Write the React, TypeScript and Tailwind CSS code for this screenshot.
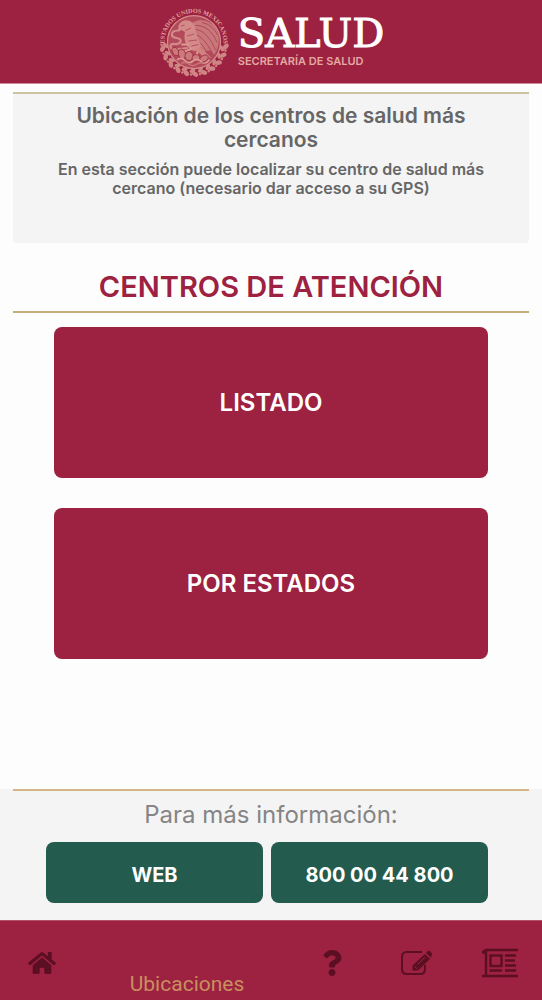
import React from 'react';
import { FaHome, FaQuestion } from 'react-icons/fa';

const leaves = Array.from({ length: 11 }, (_, i) => 10 + i * 16);

const Emblem: React.FC = () => (
  <svg viewBox="0 0 144 144" className="size-18 shrink-0" role="img" aria-label="Estados Unidos Mexicanos">
    <defs>
      <path id="ring" d="M15 88 A59 59 0 1 1 129 88" />
    </defs>
    <text fill="#e0a29d" fontFamily="Liberation Serif, serif" fontWeight="700" fontSize="12.5">
      <textPath href="#ring" startOffset="50%" textAnchor="middle">ESTADOS UNIDOS MEXICANOS</textPath>
    </text>

    {/* laurel and oak wreath */}
    <g fill="#cf8583">
      {leaves.map(a => (
        <g key={a} transform={`rotate(${a} 72 72)`}>
          <ellipse cx="136" cy="70" rx="4.5" ry="7" transform="rotate(35 136 70)" />
          <ellipse cx="129" cy="75" rx="3.5" ry="6.5" transform="rotate(-35 129 75)" />
          <circle cx="137" cy="78" r="2.5" />
        </g>
      ))}
    </g>

    <circle cx="72" cy="72" r="53" fill="#b34a5b" stroke="#d38d8a" strokeWidth="2.5" />

    {/* wing */}
    <path d="M60 42 C76 21 104 27 116 45 C125 61 123 83 112 98 C108 88 100 87 92 92 C86 80 73 70 64 65 Z" fill="#c9777a" />
    <g fill="none" stroke="#a63a4e" strokeWidth="1.5">
      <path d="M69 47 C86 45 102 58 115 88" />
      <path d="M75 39 C93 38 109 50 118 73" />
      <path d="M67 55 C82 56 95 69 108 93" />
      <path d="M71 65 C82 70 91 80 97 91" />
      <path d="M88 33 C103 36 114 46 119 58" />
    </g>

    {/* head and breast */}
    <path d="M41 39 C46 28 61 25 69 34 C78 46 76 62 85 76 C88 88 77 94 66 87 C54 79 51 65 54 52 L47 48 L40 52 Z" fill="#d48a88" />
    <path d="M46 40 L53 38 M55 49 L66 44 M58 60 L72 56 M61 70 L78 68 M67 80 L81 77" stroke="#ab3e52" strokeWidth="1.5" fill="none" />
    <path d="M84 82 L107 104 L90 101 L76 88 Z" fill="#d08380" />

    {/* snake */}
    <path d="M39 49 C25 50 24 62 37 64 C53 67 44 78 32 76 C21 75 23 88 35 87 L58 84" fill="none" stroke="#d48a88" strokeWidth="4.5" strokeLinecap="round" />
    <path d="M66 86 L54 91 M61 77 L48 77 M79 92 L76 102" stroke="#dc9995" strokeWidth="4" strokeLinecap="round" />

    {/* cactus, rock and water */}
    <g fill="#ca7a7a" stroke="#9d2840" strokeWidth="1.5">
      <ellipse cx="35" cy="91" rx="6" ry="9" transform="rotate(-30 35 91)" />
      <ellipse cx="48" cy="96" rx="7" ry="10" transform="rotate(-18 48 96)" />
      <ellipse cx="62" cy="100" rx="8" ry="9" />
      <ellipse cx="76" cy="104" rx="8" ry="7" />
      <ellipse cx="92" cy="105" rx="9" ry="6" transform="rotate(-24 92 105)" />
    </g>
    <path d="M38 108 Q46 101 54 109 T70 110 T86 111 T103 107" fill="none" stroke="#dc9995" strokeWidth="3.5" />
    <path d="M46 115 Q53 110 61 116 T76 117 T94 114" fill="none" stroke="#c77575" strokeWidth="3" />
  </svg>
);

const HomeIcon: React.FC = () => <FaHome size={28} aria-hidden="true" />;

const EditIcon: React.FC = () => (
  <svg viewBox="0 0 32 26" className="h-[26px] w-8" aria-hidden="true">
    <path d="M22 2 H7 Q2 2 2 7 V19 Q2 24 7 24 H20 Q25 24 25 19 V15" fill="none" stroke="currentColor" strokeWidth="2" />
    <path d="M25 4 L30 9 L18 20.5 H12.5 V15.5 Z" fill="currentColor" />
    <path d="M26 3 L28 1 Q29 0.3 30 1.2 L32 3.4 Q32.5 4.3 31.8 5 L30.8 7.6 Z" fill="currentColor" />
    <path d="M14.5 16.2 L17 18.8 M18 14 L25 7.2" stroke="#9d2140" strokeWidth="1" />
  </svg>
);

const NewsIcon: React.FC = () => (
  <svg viewBox="0 0 36 30" className="h-[30px] w-9" aria-hidden="true">
    <g fill="none" stroke="currentColor" strokeWidth="2.4">
      <path d="M0 4.5 L4 2 H36 M0 4.5 H4 M0 28 H36 M4 2 V28" />
      <rect x="8.5" y="7.5" width="11" height="10.5" />
      <path d="M23 7.5 H34 M23 12.5 H33 M23 17.5 H34 M7.5 22.5 H20 M23 22.5 H34" />
    </g>
  </svg>
);

const App: React.FC = () => {
  return (
    <div className="flex min-h-screen flex-col bg-[#fdfdfd] font-['Inter',sans-serif] text-[#666666]">
      <header className="flex h-21 items-center justify-center gap-2 border-b border-[#cf8b9b] bg-[#9d2140]">
        <Emblem />
        <div>
          <p className="font-['DejaVu_Serif',serif] text-[40px] leading-10 text-white [-webkit-text-stroke:1px_white]">SALUD</p>
          <p className="pt-0.5 pb-1 text-[11px] leading-3 font-semibold text-[#e3a9a3]">SECRETARÍA DE SALUD</p>
        </div>
      </header>

      <main className="flex flex-1 flex-col px-[13px] pt-2">
        <section className="h-[151px] rounded-b border-t-2 border-[#cdc3a0] bg-[#f4f4f4] px-8 pt-2.5 text-center">
          <h1 className="text-[21px] leading-6 font-semibold">Ubicación de los centros de salud más cercanos</h1>
          <p className="pt-2 text-[16px] leading-[19px] font-semibold">
            En esta sección puede localizar su centro de salud más cercano (necesario dar acceso a su GPS)
          </p>
        </section>

        <h2 className="border-b-2 border-[#c6ae7b] pt-[26px] pb-1.5 text-center text-[29px] leading-9 font-semibold text-[#9d2140]">
          CENTROS DE ATENCIÓN
        </h2>

        <div className="flex flex-col gap-[30px] px-[41px] pt-3.5 pb-8">
          <button className="h-[151px] rounded-lg bg-[#9d2140] text-[24px] font-semibold text-white">LISTADO</button>
          <button className="h-[151px] rounded-lg bg-[#9d2140] text-[24px] font-semibold text-white">POR ESTADOS</button>
        </div>
      </main>

      <section className="bg-[#f4f4f4] pb-[17px] text-center">
        <div className="mx-[13px] h-0.5 bg-[#d3b684]" />
        <p className="pt-1.5 pb-2.5 text-[24px] leading-[35px] text-[#858585]">Para más información:</p>
        <div className="grid grid-cols-2 gap-2 pr-[54px] pl-[46px]">
          <a href="#web" className="flex h-[61px] items-center justify-center rounded-lg bg-[#235b4e] pt-1 text-[20px] font-bold text-white">
            WEB
          </a>
          <a href="tel:8000044800" className="flex h-[61px] items-center justify-center rounded-lg bg-[#235b4e] pt-1 text-[20px] font-bold text-white">
            800 00 44 800
          </a>
        </div>
      </section>

      <nav className="flex h-20 border-t border-[#b2506a] bg-[#9d2140] text-[#5c0f22]">
        <a href="#inicio" aria-label="Inicio" className="flex w-21 items-center justify-center pt-1">
          <HomeIcon />
        </a>
        <a href="#ubicaciones" className="flex flex-1 items-end justify-center pb-1 font-['Roboto',sans-serif] text-[21px] leading-6 text-[#c98f5f]">
          Ubicaciones
        </a>
        <a href="#ayuda" aria-label="Ayuda" className="flex w-21 items-center justify-center pt-1">
          <FaQuestion size={26} />
        </a>
        <a href="#registro" aria-label="Registro" className="flex w-21 items-center justify-center pt-1">
          <EditIcon />
        </a>
        <a href="#noticias" aria-label="Noticias" className="flex w-21 items-center justify-center pt-1">
          <NewsIcon />
        </a>
      </nav>
    </div>
  );
};

export default App;
